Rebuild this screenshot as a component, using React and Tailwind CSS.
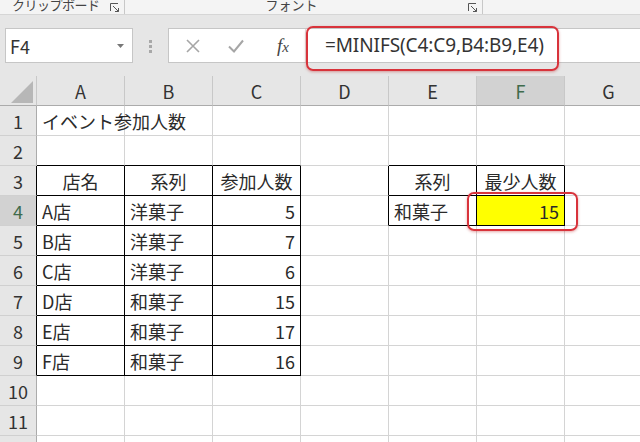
import React from "react";

const COLS = ["A", "B", "C", "D", "E", "F", "G"];

const DATA = {
  1: { A: { t: "イベント参加人数" } },
  3: {
    A: { t: "店名", a: "c" },
    B: { t: "系列", a: "c" },
    C: { t: "参加人数", a: "c" },
    E: { t: "系列", a: "c" },
    F: { t: "最少人数", a: "c" },
  },
  4: { A: { t: "A店" }, B: { t: "洋菓子" }, C: { t: "5", a: "r" }, E: { t: "和菓子" }, F: { t: "15", a: "r", y: true } },
  5: { A: { t: "B店" }, B: { t: "洋菓子" }, C: { t: "7", a: "r" } },
  6: { A: { t: "C店" }, B: { t: "洋菓子" }, C: { t: "6", a: "r" } },
  7: { A: { t: "D店" }, B: { t: "和菓子" }, C: { t: "15", a: "r" } },
  8: { A: { t: "E店" }, B: { t: "和菓子" }, C: { t: "17", a: "r" } },
  9: { A: { t: "F店" }, B: { t: "和菓子" }, C: { t: "16", a: "r" } },
};

function inTable(r, c) {
  if (r >= 3 && r <= 9 && c >= 0 && c <= 2) return true;
  if (r >= 3 && r <= 4 && c >= 4 && c <= 5) return true;
  return false;
}

function Launcher() {
  return (
    <svg width="10" height="9" viewBox="0 0 10 9" className="shrink-0">
      <path d="M0.5 8 V0.5 H8" fill="none" stroke="#555" strokeWidth="1" />
      <path d="M3 3 L8.5 8.5 M8.5 5 V8.5 H5" fill="none" stroke="#555" strokeWidth="1" />
    </svg>
  );
}

function Cell({ r, c }) {
  const col = COLS[c];
  const d = (DATA[r] || {})[col];
  const rightBlack = inTable(r, c) || inTable(r, c + 1);
  const bottomBlack = inTable(r, c) || inTable(r + 1, c);
  const cls = [
    "w-[88px] h-[30px] shrink-0 border-r border-b flex items-center px-[5px] text-[18px] leading-none text-[#2a2a2a] whitespace-nowrap",
    rightBlack ? "border-r-black" : "border-r-[#d4d4d4]",
    bottomBlack ? "border-b-black" : "border-b-[#d4d4d4]",
    d && d.y ? "bg-[#ffff00]" : "bg-white",
    d && d.a === "c" ? "justify-center" : d && d.a === "r" ? "justify-end" : "justify-start",
  ].join(" ");
  return <div className={cls}>{d ? <span className="relative z-10">{d.t}</span> : null}</div>;
}

function Row({ r }) {
  const sel = r === 4;
  return (
    <div className="flex h-[30px]">
      <div
        className={[
          "w-[37px] h-[30px] shrink-0 border-r border-b border-b-[#d0d0d0] flex items-center justify-center text-[18px] leading-none",
          r >= 3 && r <= 9 ? "border-r-black" : "border-r-[#ababab]",
          sel ? "bg-[#d2d2d2] text-[#3f6b4c]" : "bg-[#e6e6e6] text-[#333]",
        ].join(" ")}
      >
        {r <= 11 ? r : ""}
      </div>
      {COLS.map((_, c) => (
        <Cell key={c} r={r} c={c} />
      ))}
    </div>
  );
}

export default function App() {
  const rows = [1, 2, 3, 4, 5, 6, 7, 8, 9, 10, 11, 12];
  return (
    <div className="relative w-[640px] h-[442px] overflow-hidden bg-white font-['Noto_Sans_CJK_JP','Noto_Sans',sans-serif]">
      {/* Ribbon group labels (cut off at top) */}
      <div className="h-[15px] bg-[#f4f4f4] border-b border-[#d6d6d6] flex items-start overflow-hidden text-[13px] leading-[13px] text-[#444] whitespace-nowrap">
        <span className="ml-[12px] -mt-[2px] shrink-0 tracking-[-0.5px]">クリップボード</span>
        <div className="ml-[10px] mt-[3px] shrink-0">
          <Launcher />
        </div>
        <div className="ml-[4px] w-px h-[14px] bg-[#c8c8c8] shrink-0" />
        <span className="ml-[141px] -mt-[2px] shrink-0">フォント</span>
        <div className="ml-[150px] mt-[3px] shrink-0">
          <Launcher />
        </div>
        <div className="ml-[4px] w-px h-[14px] bg-[#c8c8c8] shrink-0" />
        <div className="ml-[170px] mt-[2px] w-[4px] h-[9px] border border-[#555] shrink-0" />
      </div>

      {/* Formula bar area */}
      <div className="h-[61px] bg-[#e6e6e6] flex items-start pt-[13px]">
        <div className="ml-[5px] w-[128px] h-[35px] bg-white border border-[#c6c6c6] flex items-center justify-between pl-[4px] pr-[8px]">
          <span className="text-[18px] leading-none text-[#333]">F4</span>
          <svg width="7" height="4" viewBox="0 0 7 4">
            <path d="M0 0 H7 L3.5 4 Z" fill="#777" />
          </svg>
        </div>
        <div className="ml-[16px] mt-[12px] flex flex-col gap-[2px]">
          <div className="w-[3px] h-[3px] bg-[#a8a8a8]" />
          <div className="w-[3px] h-[3px] bg-[#a8a8a8]" />
          <div className="w-[3px] h-[3px] bg-[#a8a8a8]" />
        </div>
        <div className="ml-[16px] flex-1 h-[35px] bg-white border border-r-0 border-[#c6c6c6] flex items-center">
          <svg width="14" height="14" viewBox="0 0 14 14" className="ml-[17px] shrink-0">
            <path d="M1 1 L13 13 M13 1 L1 13" stroke="#a6a6a6" strokeWidth="1.6" fill="none" />
          </svg>
          <svg width="16" height="14" viewBox="0 0 16 14" className="ml-[28px] shrink-0">
            <path d="M1 7.5 L6 12.5 L15 1.5" stroke="#a6a6a6" strokeWidth="2" fill="none" />
          </svg>
          <span className="ml-[33px] shrink-0 font-['Liberation_Serif',serif] italic text-[19px] leading-none text-[#444]">
            f<span className="text-[15px]">x</span>
          </span>
          <div className="ml-[16px] w-px h-[33px] bg-[#e0e0e0] shrink-0" />
          <span className="ml-[19px] shrink-0 font-['Noto_Sans',sans-serif] text-[19px] leading-none text-[#333] tracking-[-0.1px] whitespace-nowrap">
            =MINIFS(C4:C9,B4:B9,E4)
          </span>
        </div>
      </div>

      {/* Column headers */}
      <div className="flex h-[30px]">
        <div className="w-[37px] h-[30px] shrink-0 bg-[#e6e6e6] border-r border-b border-r-[#c8c8c8] border-b-[#ababab] flex items-end justify-end pr-[3px] pb-[2px]">
          <svg width="22" height="22" viewBox="0 0 22 22">
            <path d="M22 0 V22 H0 Z" fill="#b7b7b7" />
          </svg>
        </div>
        {COLS.map((l) => (
          <div
            key={l}
            className={[
              "w-[88px] h-[30px] shrink-0 border-r border-b border-r-[#c8c8c8] border-b-[#ababab] flex items-center justify-center text-[18px] leading-none",
              l === "F" ? "bg-[#d2d2d2] text-[#3f6b4c]" : "bg-[#e6e6e6] text-[#333]",
            ].join(" ")}
          >
            {l}
          </div>
        ))}
      </div>

      {rows.map((r) => (
        <Row key={r} r={r} />
      ))}

      {/* Red highlight boxes */}
      <div className="absolute z-20 left-[306px] top-[26px] w-[253px] h-[45px] border-2 border-[#d8333b] rounded-[7px] shadow-[0_1px_3px_rgba(180,0,0,0.35)]" />
      <div className="absolute z-20 left-[467px] top-[192px] w-[111px] h-[39px] border-2 border-[#d8333b] rounded-[7px] shadow-[0_1px_3px_rgba(180,0,0,0.35)]" />
    </div>
  );
}
